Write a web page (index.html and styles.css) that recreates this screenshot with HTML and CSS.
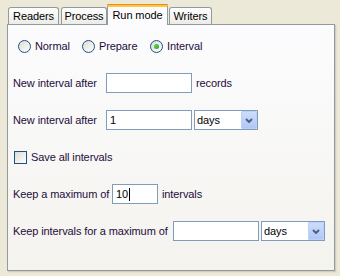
FILE: index.html
```html
<!DOCTYPE html>
<html lang="en">
<head>
    <meta charset="UTF-8">
    <title>Run mode</title>
    <link rel="stylesheet" href="styles.css">
</head>
<body>
    <div class="window">
        <div class="tabs">
            <div class="tab tab-readers">Readers</div>
            <div class="tab tab-process">Process</div>
            <div class="tab tab-active tab-runmode">Run mode</div>
            <div class="tab tab-writers">Writers</div>
        </div>
        <div class="pane">
            <div class="row radios">
                <div class="radio-item item-normal"><span class="radio"></span>Normal</div>
                <div class="radio-item item-prepare"><span class="radio"></span>Prepare</div>
                <div class="radio-item"><span class="radio checked"></span>Interval</div>
            </div>
            <div class="row">
                <span class="label label-after">New interval after</span>
                <span class="field field-wide"></span>
                <span class="unit">records</span>
            </div>
            <div class="row">
                <span class="label label-after">New interval after</span>
                <span class="field field-wide">1</span>
                <div class="combo">
                    <span class="combo-text">days</span>
                    <span class="combo-btn">
                        <svg width="8" height="5" viewBox="0 0 8 5"><path d="M1 1 L4 4 L7 1" fill="none" stroke="#4d6185" stroke-width="2"/></svg>
                    </span>
                </div>
            </div>
            <div class="row">
                <div class="check-item"><span class="checkbox"></span>Save all intervals</div>
            </div>
            <div class="row">
                <span class="label label-keep">Keep a maximum of</span>
                <span class="field field-small">10<span class="caret"></span></span>
                <span class="unit">intervals</span>
            </div>
            <div class="row">
                <span class="label label-keepfor">Keep intervals for a maximum of</span>
                <span class="field field-wide"></span>
                <div class="combo">
                    <span class="combo-text">days</span>
                    <span class="combo-btn">
                        <svg width="8" height="5" viewBox="0 0 8 5"><path d="M1 1 L4 4 L7 1" fill="none" stroke="#4d6185" stroke-width="2"/></svg>
                    </span>
                </div>
            </div>
        </div>
    </div>
</body>
</html>
```

FILE: styles.css
```css
body {
    margin: 0;
    width: 340px;
    height: 276px;
    background-color: #ece9d8;
    font-family: "Liberation Sans", Arial, sans-serif;
    font-size: 11px;
    letter-spacing: -0.1px;
    color: #000;
}

.window {
    margin-left: 7px;
    width: 328px;
}

.tabs {
    display: flex;
    align-items: flex-end;
    height: 24px;
    padding-left: 1px;
}

.tab {
    box-sizing: border-box;
    height: 17px;
    border: 1px solid #919b9c;
    border-bottom: none;
    border-radius: 3px 3px 0 0;
    background: linear-gradient(#ffffff, #ecebe6);
    text-align: center;
    line-height: 16px;
    margin-right: 1px;
}

.tab-readers { width: 51px; margin-right: 2px; }
.tab-process { width: 46px; margin-right: 0; }
.tab-runmode { width: 61px; }
.tab-writers { width: 43px; }

.tab-active {
    position: relative;
    z-index: 1;
    height: 21px;
    margin-bottom: -1px;
    border-top: 3px solid #ffc73c;
    background: #fcfcfe;
    line-height: 16px;
    border-radius: 2px 2px 0 0;
}

/* dark orange line on top of the selected tab */
.tab-active::before {
    content: "";
    position: absolute;
    left: -1px;
    right: -1px;
    top: -3px;
    height: 1px;
    background: #e68b2c;
    border-radius: 2px 2px 0 0;
}

.pane {
    box-sizing: border-box;
    height: 247px;
    border: 1px solid #919b9c;
    background: linear-gradient(#fcfcfe, #f4f3ee);
    box-shadow: 1px 1px 0 #d0cec0, 2px 2px 0 #e3e0d0;
    padding: 11px 5px 0 5px;
    display: flex;
    flex-direction: column;
    gap: 17px;
    color: #1e0c3c;
}

.row {
    display: flex;
    align-items: center;
    height: 20px;
}

.radios {
    padding-left: 5px;
}

.radio-item {
    display: flex;
    align-items: center;
}

.item-normal { width: 64px; }
.item-prepare { width: 68px; }

.radio {
    box-sizing: border-box;
    width: 13px;
    height: 13px;
    border: 1px solid #1c5180;
    border-radius: 50%;
    background: linear-gradient(135deg, #dcdbd5, #ffffff);
    margin-right: 4px;
    display: flex;
    align-items: center;
    justify-content: center;
}

.radio.checked::after {
    content: "";
    width: 5px;
    height: 5px;
    border-radius: 50%;
    background: radial-gradient(circle at 35% 35%, #55d551, #21a121);
}

.check-item {
    display: flex;
    align-items: center;
    margin-left: 1px;
}

.checkbox {
    box-sizing: border-box;
    width: 13px;
    height: 13px;
    border: 1px solid #1c5180;
    background: linear-gradient(135deg, #dcdbd5, #ffffff);
    margin-right: 4px;
}

.label-after { width: 93px; }
.label-keep { width: 99px; }
.label-keepfor { width: 160px; }

.field {
    box-sizing: border-box;
    height: 20px;
    border: 1px solid #7f9db9;
    background: #fff;
    padding-left: 3px;
    display: flex;
    align-items: center;
    color: #000;
}

.field-wide { width: 86px; }
.field-small { width: 46px; }

.caret {
    width: 1px;
    height: 13px;
    background: #000;
    margin-left: 1px;
}

.unit {
    margin-left: 4px;
}

.combo {
    box-sizing: border-box;
    width: 64px;
    height: 20px;
    margin-left: 2px;
    border: 1px solid #7f9db9;
    background: #fff;
    display: flex;
    align-items: center;
    color: #000;
}

.combo-text {
    flex: 1;
    padding-left: 2px;
}

.combo-btn {
    box-sizing: border-box;
    width: 16px;
    height: 18px;
    border: 1px solid #bccffa;
    border-radius: 1px;
    background: linear-gradient(#cddcfc, #b1c7f6);
    display: flex;
    align-items: center;
    justify-content: center;
}
```
